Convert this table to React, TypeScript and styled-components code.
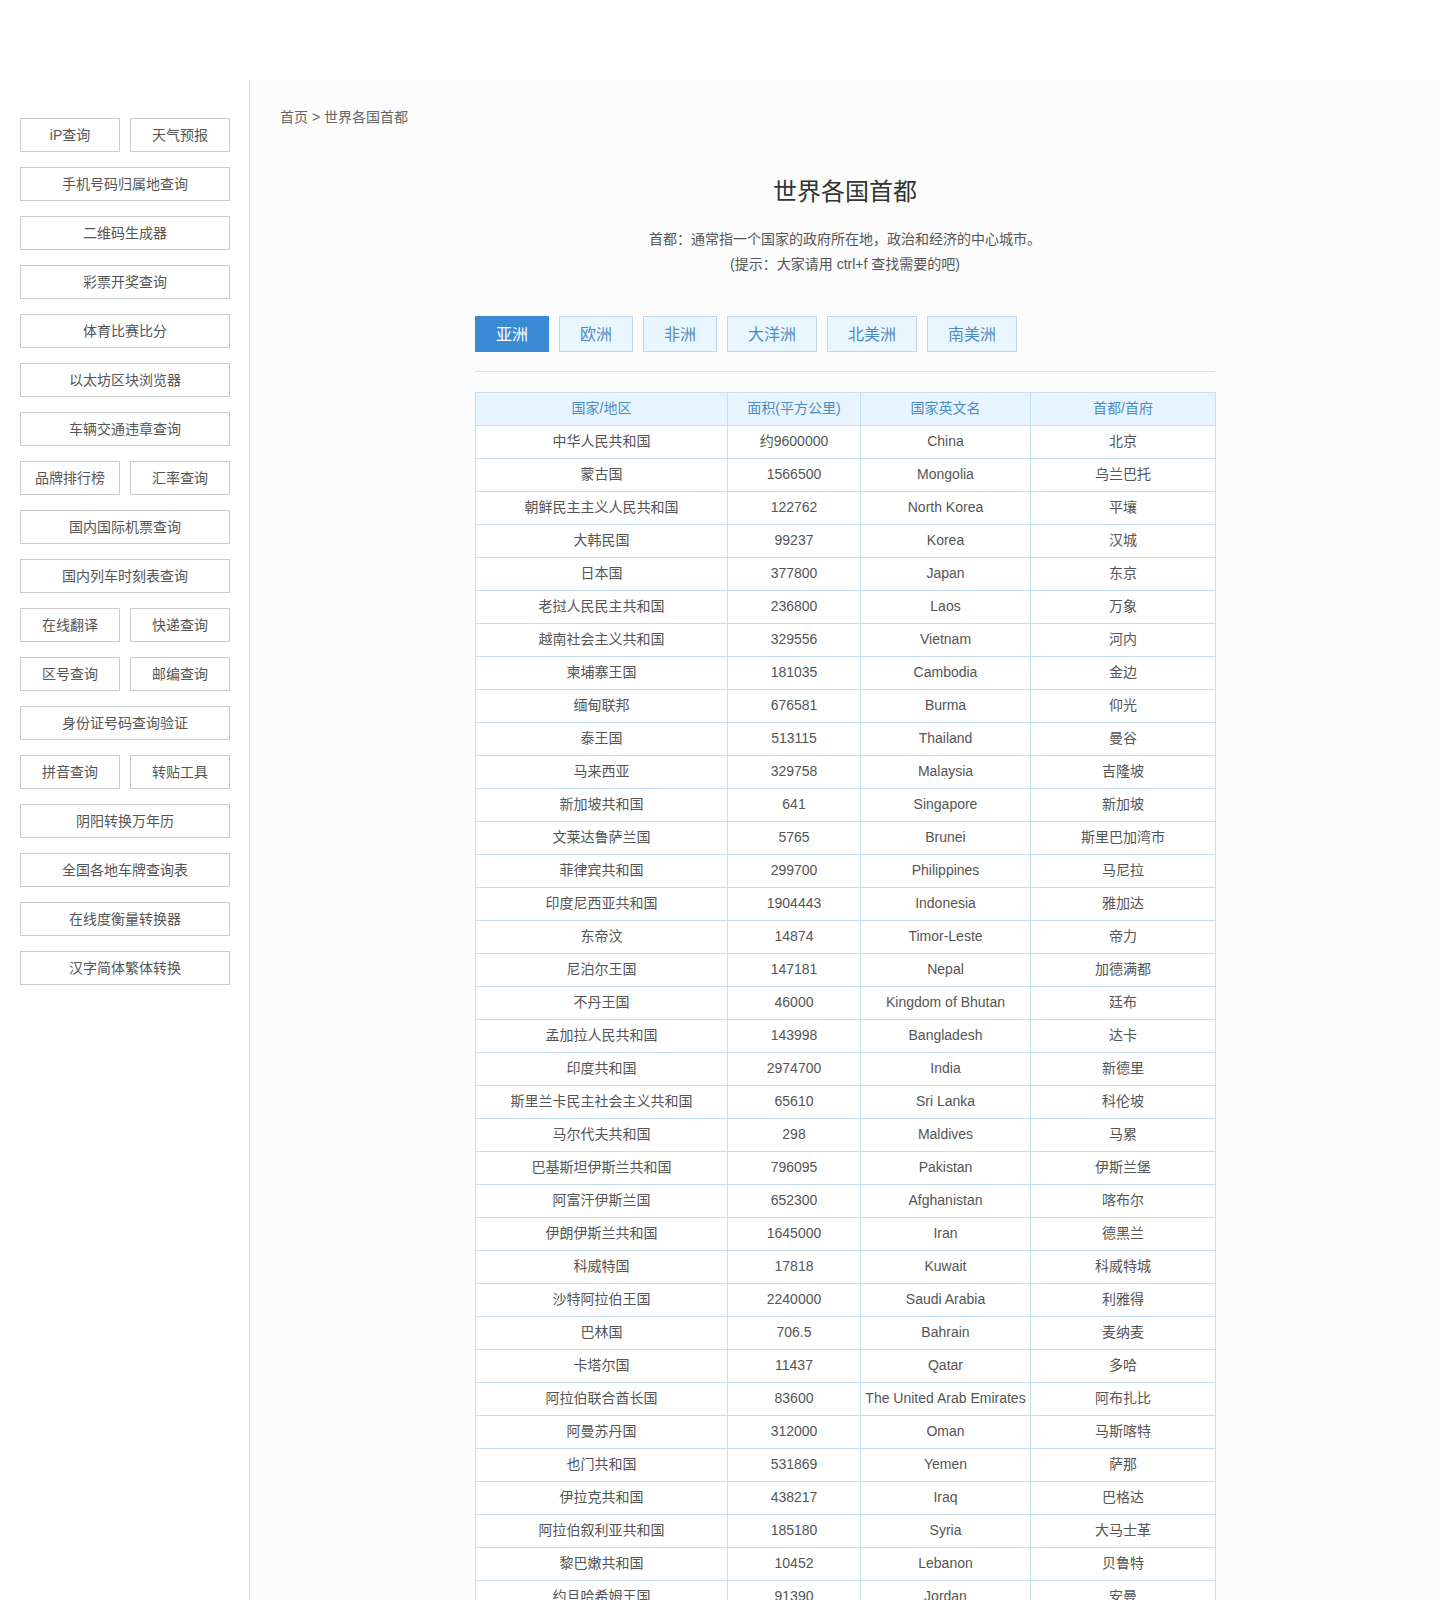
import React from "react";
import styled, { createGlobalStyle } from "styled-components";

const GlobalStyle = createGlobalStyle`
  html, body {
    margin: 0;
    padding: 0;
    background: #ffffff;
  }
  body {
    font-family: "Liberation Sans", Arial, "Noto Sans CJK SC", sans-serif;
    color: #555;
  }
  * { box-sizing: border-box; }
`;

const Page = styled.div`
  display: flex;
  align-items: stretch;
  padding-top: 80px;
  min-height: 1600px;
`;

const Sidebar = styled.aside`
  width: 250px;
  flex: none;
  border-right: 1px solid #dddddd;
  padding: 38px 0 0 20px;
  display: flex;
  flex-direction: column;
  gap: 15px;
`;

const ButtonRow = styled.div`
  display: flex;
  gap: 10px;
  width: 210px;
`;

const NavButton = styled.a<{ $half?: boolean }>`
  width: ${(p) => (p.$half ? "100px" : "210px")};
  height: 34px;
  border: 1px solid #cccccc;
  background: #ffffff;
  display: flex;
  align-items: center;
  justify-content: center;
  padding-bottom: 3px;
  font-size: 14px;
  color: #555555;
  text-decoration: none;
  white-space: nowrap;
`;

const Main = styled.main`
  flex: 1;
  background: #fcfcfc;
  padding: 27px 30px 40px;
`;

const Breadcrumb = styled.div`
  font-size: 14px;
  line-height: 20px;
  color: #666666;
`;

const Content = styled.div`
  width: 740px;
  margin: 0 auto;
`;

const Title = styled.h1`
  margin: 48px 0 0;
  font-size: 24px;
  line-height: 34px;
  font-weight: normal;
  color: #333333;
  text-align: center;
`;

const Desc = styled.div`
  margin-top: 18px;
  font-size: 14px;
  line-height: 25px;
  color: #555555;
  text-align: center;
`;

const Tabs = styled.div`
  display: flex;
  gap: 10px;
  margin-top: 39px;
`;

const Tab = styled.a<{ $active?: boolean }>`
  height: 36px;
  padding: 0 20px 3px;
  display: flex;
  align-items: center;
  font-size: 16px;
  text-decoration: none;
  border: 1px solid ${(p) => (p.$active ? "#3a8bd3" : "#bcd8ec")};
  background: ${(p) => (p.$active ? "#3a8bd3" : "#eaf6fe")};
  color: ${(p) => (p.$active ? "#ffffff" : "#4a8dc6")};
`;

const Divider = styled.hr`
  margin: 19px 0 0;
  border: 0;
  height: 1px;
  background: #dddddd;
`;

const Table = styled.table`
  margin-top: 20px;
  width: 740px;
  border-collapse: collapse;
  table-layout: fixed;
  background: #ffffff;
`;

const HeadCell = styled.th`
  border: 1px solid #c6dfee;
  background: #e8f4fd;
  color: #4a8dc6;
  font-weight: normal;
  font-size: 14px;
  line-height: 31px;
  padding: 0 0 1px;
  text-align: center;
`;

const Cell = styled.td`
  border: 1px solid #c6dfee;
  color: #555555;
  font-size: 14px;
  line-height: 31px;
  padding: 0 0 1px;
  text-align: center;
  white-space: nowrap;
`;

type NavItem = string | [string, string];

const navItems: NavItem[] = [
  ["iP查询", "天气预报"],
  "手机号码归属地查询",
  "二维码生成器",
  "彩票开奖查询",
  "体育比赛比分",
  "以太坊区块浏览器",
  "车辆交通违章查询",
  ["品牌排行榜", "汇率查询"],
  "国内国际机票查询",
  "国内列车时刻表查询",
  ["在线翻译", "快递查询"],
  ["区号查询", "邮编查询"],
  "身份证号码查询验证",
  ["拼音查询", "转贴工具"],
  "阴阳转换万年历",
  "全国各地车牌查询表",
  "在线度衡量转换器",
  "汉字简体繁体转换",
];

const tabs = ["亚洲", "欧洲", "非洲", "大洋洲", "北美洲", "南美洲"];

const rows: [string, string, string, string][] = [
  ["中华人民共和国", "约9600000", "China", "北京"],
  ["蒙古国", "1566500", "Mongolia", "乌兰巴托"],
  ["朝鲜民主主义人民共和国", "122762", "North Korea", "平壤"],
  ["大韩民国", "99237", "Korea", "汉城"],
  ["日本国", "377800", "Japan", "东京"],
  ["老挝人民民主共和国", "236800", "Laos", "万象"],
  ["越南社会主义共和国", "329556", "Vietnam", "河内"],
  ["柬埔寨王国", "181035", "Cambodia", "金边"],
  ["缅甸联邦", "676581", "Burma", "仰光"],
  ["泰王国", "513115", "Thailand", "曼谷"],
  ["马来西亚", "329758", "Malaysia", "吉隆坡"],
  ["新加坡共和国", "641", "Singapore", "新加坡"],
  ["文莱达鲁萨兰国", "5765", "Brunei", "斯里巴加湾市"],
  ["菲律宾共和国", "299700", "Philippines", "马尼拉"],
  ["印度尼西亚共和国", "1904443", "Indonesia", "雅加达"],
  ["东帝汶", "14874", "Timor-Leste", "帝力"],
  ["尼泊尔王国", "147181", "Nepal", "加德满都"],
  ["不丹王国", "46000", "Kingdom of Bhutan", "廷布"],
  ["孟加拉人民共和国", "143998", "Bangladesh", "达卡"],
  ["印度共和国", "2974700", "India", "新德里"],
  ["斯里兰卡民主社会主义共和国", "65610", "Sri Lanka", "科伦坡"],
  ["马尔代夫共和国", "298", "Maldives", "马累"],
  ["巴基斯坦伊斯兰共和国", "796095", "Pakistan", "伊斯兰堡"],
  ["阿富汗伊斯兰国", "652300", "Afghanistan", "喀布尔"],
  ["伊朗伊斯兰共和国", "1645000", "Iran", "德黑兰"],
  ["科威特国", "17818", "Kuwait", "科威特城"],
  ["沙特阿拉伯王国", "2240000", "Saudi Arabia", "利雅得"],
  ["巴林国", "706.5", "Bahrain", "麦纳麦"],
  ["卡塔尔国", "11437", "Qatar", "多哈"],
  ["阿拉伯联合酋长国", "83600", "The United Arab Emirates", "阿布扎比"],
  ["阿曼苏丹国", "312000", "Oman", "马斯喀特"],
  ["也门共和国", "531869", "Yemen", "萨那"],
  ["伊拉克共和国", "438217", "Iraq", "巴格达"],
  ["阿拉伯叙利亚共和国", "185180", "Syria", "大马士革"],
  ["黎巴嫩共和国", "10452", "Lebanon", "贝鲁特"],
  ["约旦哈希姆王国", "91390", "Jordan", "安曼"],
];

export default function App() {
  return (
    <>
      <GlobalStyle />
      <Page>
        <Sidebar>
          {navItems.map((item, i) =>
            Array.isArray(item) ? (
              <ButtonRow key={i}>
                <NavButton $half href="#">{item[0]}</NavButton>
                <NavButton $half href="#">{item[1]}</NavButton>
              </ButtonRow>
            ) : (
              <NavButton key={i} href="#">{item}</NavButton>
            )
          )}
        </Sidebar>
        <Main>
          <Breadcrumb>首页 &gt; 世界各国首都</Breadcrumb>
          <Content>
            <Title>世界各国首都</Title>
            <Desc>
              首都：通常指一个国家的政府所在地，政治和经济的中心城市。
              <br />
              (提示：大家请用 ctrl+f 查找需要的吧)
            </Desc>
            <Tabs>
              {tabs.map((t, i) => (
                <Tab key={t} href="#" $active={i === 0}>
                  {t}
                </Tab>
              ))}
            </Tabs>
            <Divider />
            <Table>
              <colgroup>
                <col style={{ width: 252 }} />
                <col style={{ width: 133 }} />
                <col style={{ width: 170 }} />
                <col style={{ width: 185 }} />
              </colgroup>
              <thead>
                <tr>
                  <HeadCell>国家/地区</HeadCell>
                  <HeadCell>面积(平方公里)</HeadCell>
                  <HeadCell>国家英文名</HeadCell>
                  <HeadCell>首都/首府</HeadCell>
                </tr>
              </thead>
              <tbody>
                {rows.map((r) => (
                  <tr key={r[0]}>
                    <Cell>{r[0]}</Cell>
                    <Cell>{r[1]}</Cell>
                    <Cell>{r[2]}</Cell>
                    <Cell>{r[3]}</Cell>
                  </tr>
                ))}
              </tbody>
            </Table>
          </Content>
        </Main>
      </Page>
    </>
  );
}
